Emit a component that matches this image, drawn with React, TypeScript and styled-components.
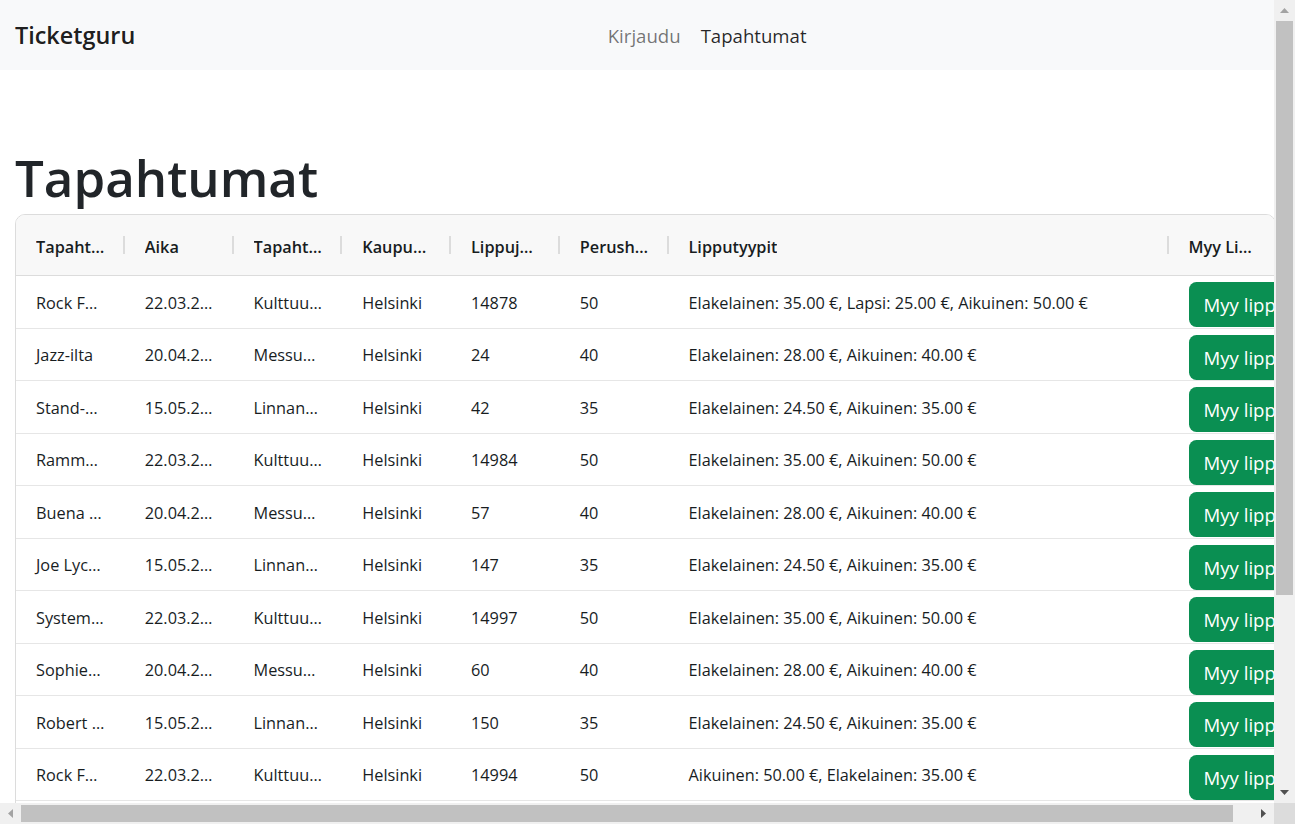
import React from "react";
import styled, { createGlobalStyle } from "styled-components";

const FONT = `"Open Sans", "Noto Sans", Roboto, sans-serif`;

const GlobalStyle = createGlobalStyle`
  html, body {
    margin: 0;
    overflow: hidden;
  }
  body {
    font-family: ${FONT};
    color: #212529;
    background: #fff;
  }
`;

/* ---------- window frame with classic scrollbars ---------- */

const Viewport = styled.div`
  display: grid;
  grid-template-columns: minmax(0, 1fr) 21px;
  grid-template-rows: minmax(0, 1fr) 21px;
  width: 100vw;
  height: 100vh;
  overflow: hidden;
`;

const Page = styled.div`
  overflow: hidden;
  min-width: 0;
  min-height: 0;
`;

const VBar = styled.div`
  display: flex;
  flex-direction: column;
  background: #f0f0f0;
`;

const HBar = styled.div`
  display: flex;
  background: #f0f0f0;
`;

const Corner = styled.div`
  background: #dcdcdc;
`;

const ArrowBtn = styled.div`
  flex: none;
  width: 21px;
  height: 21px;
  display: flex;
  align-items: center;
  justify-content: center;
`;

const VTrack = styled.div`
  flex: 1;
  padding: 0 2px;
`;

const HTrack = styled.div`
  flex: 1;
  padding: 2px 0;
`;

const Thumb = styled.div`
  background: #c1c1c1;
  width: 100%;
  height: 100%;
`;

const Arrow = ({ dir, color }: { dir: "up" | "down" | "left" | "right"; color: string }) => {
  const vertical = dir === "up" || dir === "down";
  const w = vertical ? 9 : 5;
  const h = vertical ? 5 : 9;
  const pts =
    dir === "up"
      ? "0,5 4.5,0 9,5"
      : dir === "down"
      ? "0,0 9,0 4.5,5"
      : dir === "left"
      ? "5,0 5,9 0,4.5"
      : "0,0 5,4.5 0,9";
  return (
    <svg width={w} height={h} viewBox={`0 0 ${w} ${h}`}>
      <polygon points={pts} fill={color} />
    </svg>
  );
};

/* ---------- navbar ---------- */

const NavBar = styled.nav`
  display: flex;
  align-items: center;
  height: 70px;
  padding: 0 15px;
  background: #f8f9fa;
  box-sizing: border-box;
`;

const Brand = styled.a`
  font-size: 23.4px;
  font-weight: 600;
  color: rgba(0, 0, 0, 0.9);
  margin-right: 20px;
  text-decoration: none;
  white-space: nowrap;
`;

const NavLinks = styled.div`
  display: flex;
  margin: 0 auto;
`;

const NavLink = styled.a<{ $active?: boolean }>`
  padding: 0 10px;
  font-size: 18.6px;
  color: ${(p) => (p.$active ? "rgba(0,0,0,0.85)" : "rgba(0,0,0,0.55)")};
  text-decoration: none;
`;

/* ---------- main ---------- */

const Main = styled.main`
  width: 1291px;
  box-sizing: border-box;
  padding: 77px 15px 0;
`;

const Title = styled.h1`
  margin: 0 0 6px;
  font-size: 51px;
  font-weight: 600;
  line-height: 1.2;
  color: #212529;
`;

const COLS = "repeat(6, 108.75px) 500px 108.75px";

const Grid = styled.div`
  width: 1261px;
  box-sizing: border-box;
  border: 1px solid #dcdcdc;
  border-radius: 10px;
  overflow: hidden;
  background: #fff;
  color: #181d1f;
  font-size: 16.3px;
`;

const HeaderRow = styled.div`
  display: grid;
  grid-template-columns: ${COLS};
  height: 61px;
  box-sizing: border-box;
  background: #f8f8f8;
  border-bottom: 1px solid #dcdcdc;
`;

const HeaderCell = styled.div<{ $handle?: boolean }>`
  position: relative;
  display: flex;
  align-items: center;
  padding: 3px 20px 0;
  min-width: 0;
  font-weight: 600;

  span {
    overflow: hidden;
    white-space: nowrap;
    text-overflow: ellipsis;
  }

  &::after {
    content: "";
    display: ${(p) => (p.$handle ? "block" : "none")};
    position: absolute;
    right: 0;
    top: 21px;
    width: 2px;
    height: 18px;
    background: #dcdcdc;
  }
`;

const Row = styled.div`
  display: grid;
  grid-template-columns: ${COLS};
  height: 52.5px;
  box-sizing: border-box;
  border-bottom: 1px solid #e6e6e6;
`;

const Cell = styled.div`
  box-sizing: border-box;
  height: 100%;
  padding: 2.5px 20px 0;
  min-width: 0;
  line-height: 49px;
  overflow: hidden;
  white-space: nowrap;
  text-overflow: ellipsis;
`;

const ButtonCell = styled.div`
  padding: 6px 0 0 20px;
  min-width: 0;
`;

const SellButton = styled.button`
  height: 45px;
  padding: 0 15px;
  border: none;
  border-radius: 7.5px;
  background: #0a8f52;
  color: #fff;
  font-family: ${FONT};
  font-size: 18.6px;
  white-space: nowrap;
  cursor: pointer;
`;

type Ev = {
  name: string;
  time: string;
  place: string;
  city: string;
  left: number;
  price: number;
  types: string;
};

const T1 = "Elakelainen: 35.00 €, Aikuinen: 50.00 €";
const T2 = "Elakelainen: 28.00 €, Aikuinen: 40.00 €";
const T3 = "Elakelainen: 24.50 €, Aikuinen: 35.00 €";

const a = (name: string, left: number, types = T1): Ev => ({
  name,
  time: "22.03.2025 19:00",
  place: "Kulttuuritalo",
  city: "Helsinki",
  left,
  price: 50,
  types,
});
const b = (name: string, left: number, types = T2): Ev => ({
  name,
  time: "20.04.2025 20:00",
  place: "Messukeskus",
  city: "Helsinki",
  left,
  price: 40,
  types,
});
const c = (name: string, left: number, types = T3): Ev => ({
  name,
  time: "15.05.2025 18:00",
  place: "Linnanmäki",
  city: "Helsinki",
  left,
  price: 35,
  types,
});

const events: Ev[] = [
  a("Rock Festival", 14878, "Elakelainen: 35.00 €, Lapsi: 25.00 €, Aikuinen: 50.00 €"),
  b("Jazz-ilta", 24),
  c("Stand-up ilta", 42),
  a("Rammstein", 14984),
  b("Buena Vista Social Club", 57),
  c("Joe Lycett", 147),
  a("System of a Down", 14997),
  b("Sophie Ellis-Bextor", 60),
  c("Robert Plant", 150),
  a("Rock Festival", 14994, "Aikuinen: 50.00 €, Elakelainen: 35.00 €"),
  b("Jazz-ilta", 30),
  c("Stand-up ilta", 48),
  a("Rammstein", 14990),
  b("Buena Vista Social Club", 62),
  c("Joe Lycett", 152),
];

const headers = [
  "Tapahtuma",
  "Aika",
  "Tapahtumapaikka",
  "Kaupunki",
  "Lippuja jäljellä",
  "Perushinta",
  "Lipputyypit",
  "Myy Lippuja",
];

export default function App() {
  return (
    <>
      <GlobalStyle />
      <Viewport>
        <Page>
          <NavBar>
            <Brand href="#">Ticketguru</Brand>
            <NavLinks>
              <NavLink href="#">Kirjaudu</NavLink>
              <NavLink href="#" $active>
                Tapahtumat
              </NavLink>
            </NavLinks>
          </NavBar>
          <Main>
            <Title>Tapahtumat</Title>
            <Grid>
              <HeaderRow>
                {headers.map((h, i) => (
                  <HeaderCell key={h} $handle={i < headers.length - 1}>
                    <span>{h}</span>
                  </HeaderCell>
                ))}
              </HeaderRow>
              {events.map((e, i) => (
                <Row key={i}>
                  <Cell>{e.name}</Cell>
                  <Cell>{e.time}</Cell>
                  <Cell>{e.place}</Cell>
                  <Cell>{e.city}</Cell>
                  <Cell>{e.left}</Cell>
                  <Cell>{e.price}</Cell>
                  <Cell>{e.types}</Cell>
                  <ButtonCell>
                    <SellButton>Myy lippu</SellButton>
                  </ButtonCell>
                </Row>
              ))}
            </Grid>
          </Main>
        </Page>
        <VBar>
          <ArrowBtn>
            <Arrow dir="up" color="#a3a3a3" />
          </ArrowBtn>
          <VTrack>
            <Thumb style={{ height: 574 }} />
          </VTrack>
          <ArrowBtn>
            <Arrow dir="down" color="#505050" />
          </ArrowBtn>
        </VBar>
        <HBar>
          <ArrowBtn>
            <Arrow dir="left" color="#a3a3a3" />
          </ArrowBtn>
          <HTrack>
            <Thumb style={{ width: 1212 }} />
          </HTrack>
          <ArrowBtn>
            <Arrow dir="right" color="#505050" />
          </ArrowBtn>
        </HBar>
        <Corner />
      </Viewport>
    </>
  );
}
